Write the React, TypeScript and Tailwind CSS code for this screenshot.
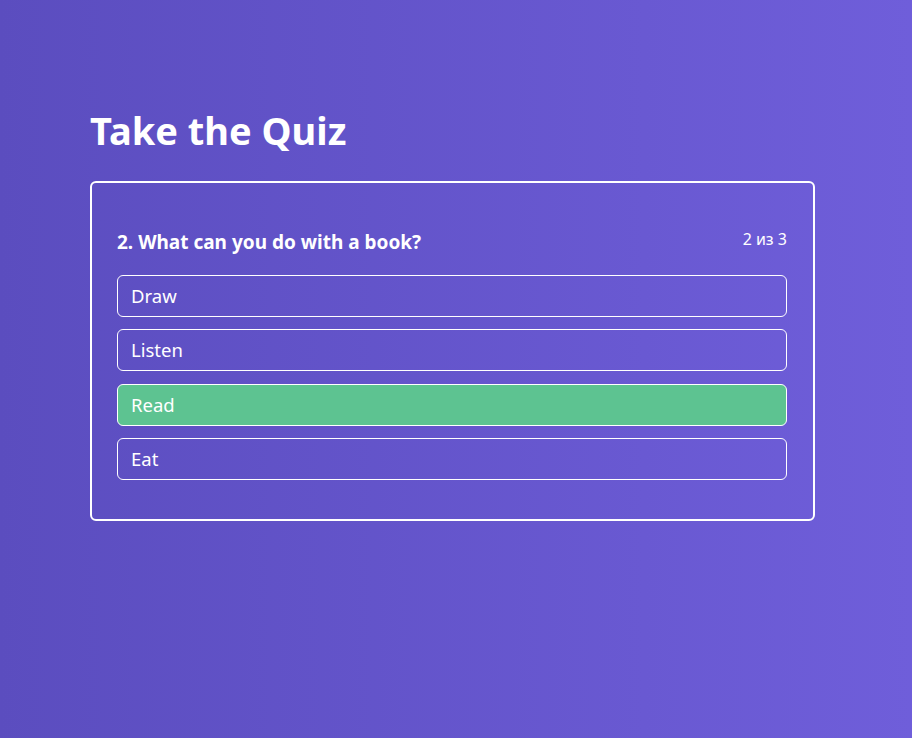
import React from "react";

const options = ["Draw", "Listen", "Read", "Eat"];

export default function App() {
  return (
    <div
      className="min-h-screen w-full bg-gradient-to-r from-[#5b4dbf] to-[#6f5eda] text-white"
      style={{ fontFamily: '"Segoe UI", "Noto Sans", "Open Sans", sans-serif' }}
    >
      <div className="ml-[90px] w-[725px] pt-[102px]">
        <h1 className="text-[38px] font-bold leading-[56px] mb-[23px]">Take the Quiz</h1>
        <div className="border-2 border-white rounded-md pl-[25px] pr-[26px] pt-[45px] pb-[39px]">
          <div className="flex justify-between items-start mb-[19px]">
            <div className="text-[19px] font-bold leading-[28px]">2. What can you do with a book?</div>
            <div className="text-[16px] leading-[24px] -mt-[1px]">2 из 3</div>
          </div>
          <div className="flex flex-col gap-[12.6px]">
            {options.map((o) => (
              <div
                key={o}
                className={
                  o === "Read"
                    ? "h-[41.8px] flex items-center px-[13px] rounded-md border border-white bg-[#5dc391] text-[18.5px]"
                    : "h-[41.8px] flex items-center px-[13px] rounded-md border border-white text-[18.5px]"
                }
              >
                {o}
              </div>
            ))}
          </div>
        </div>
      </div>
    </div>
  );
}
